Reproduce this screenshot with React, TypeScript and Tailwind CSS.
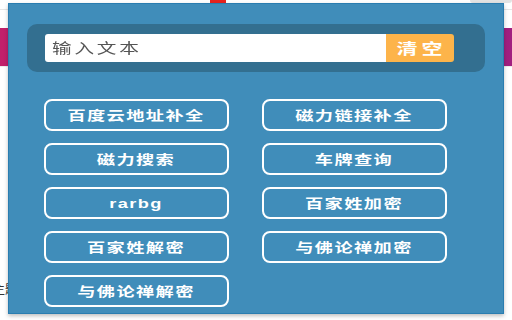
import { useState } from 'react';

const FONT = "font-['Liberation_Sans','Noto_Sans_CJK_SC',sans-serif]";

// The source screenshot is stretched sideways, so labels get a scale-x to match.
const actions = [
  '百度云地址补全',
  '磁力链接补全',
  '磁力搜索',
  '车牌查询',
  'rarbg',
  '百家姓加密',
  '百家姓解密',
  '与佛论禅加密',
  '与佛论禅解密',
];

function ActionButton({ label }: { label: string }) {
  return (
    <button
      type="button"
      className="flex h-[32px] w-[185px] items-center justify-center rounded-[8px] border-2 border-white bg-transparent"
    >
      <span className="inline-block origin-center scale-x-[1.4] text-[13px] font-bold leading-none tracking-[1px] text-white">
        {label}
      </span>
    </button>
  );
}

export default function App() {
  const [text, setText] = useState('');

  return (
    <div className={`relative h-[320px] w-[512px] overflow-hidden bg-white ${FONT}`}>
      {/* page behind the popup */}
      <div className="flex h-full flex-col">
        <div className="flex h-[3px] shrink-0">
          <div className="w-[210px]" />
          <div className="w-[16px] bg-[#e8231f]" />
          <div className="flex-1" />
          <div className="w-[42px] rounded-b-[3px] bg-[#e3e3e3]" />
        </div>
        <div className="mt-[6px] h-px shrink-0 bg-[#e6e6e6]" />
        <div className="mt-[18px] h-[38px] shrink-0 bg-gradient-to-r from-[#c1206b] to-[#a11f80]" />
        <div className="h-px shrink-0 bg-[#ececec]" />
        <div className="mt-[217px] -ml-[7px] text-[12px] leading-none text-[#333]">主题</div>
      </div>

      {/* popup */}
      <div className="absolute left-[8px] top-[3px] h-[311px] w-[496px] border border-[#2a7db0] bg-[#408dba] px-[18px] pt-[20px] shadow-[0_2px_4px_rgba(0,0,0,0.25)]">
        <div className="flex h-[48px] w-[458px] items-center rounded-[10px] bg-[#336f90] pl-[18px] pr-[31px]">
          <div className="flex h-[28px] flex-1 overflow-hidden rounded-l-[3px] bg-white">
            <input
              autoFocus
              value={text}
              onChange={(e) => setText(e.target.value)}
              placeholder="输入文本"
              className="h-full w-[71.43%] origin-left scale-x-[1.4] bg-transparent pl-[5px] text-[14px] tracking-[2px] text-[#333] outline-none placeholder:text-[#555]"
            />
          </div>
          <button
            type="button"
            onClick={() => setText('')}
            className="flex h-[28px] w-[68px] items-center justify-center rounded-r-[3px] bg-[#fdb44a]"
          >
            <span className="inline-block scale-x-[1.4] pl-[3px] text-[15px] font-bold leading-none tracking-[3px] text-white">
              清空
            </span>
          </button>
        </div>

        <div className="mt-[27px] grid grid-cols-[185px_185px] gap-x-[33px] gap-y-[12px] pl-[17px]">
          {actions.map((a) => (
            <ActionButton key={a} label={a} />
          ))}
        </div>
      </div>
    </div>
  );
}
